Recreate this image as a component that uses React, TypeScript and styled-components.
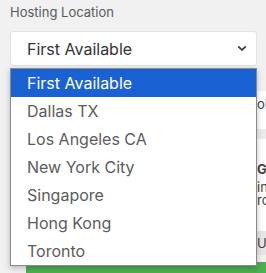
import React from "react";
import styled, { createGlobalStyle } from "styled-components";

const GlobalStyle = createGlobalStyle`
  html, body { margin: 0; padding: 0; }
  body {
    background: #f1f1f1;
    font-family: Inter, "Noto Sans", sans-serif;
    overflow: hidden;
    width: 266px;
    height: 273px;
  }
`;

const Page = styled.div`
  position: relative;
  width: 266px;
  height: 273px;
  overflow: hidden;
`;

const Field = styled.div`
  padding: 3px 0 0 10px;
  display: flex;
  flex-direction: column;
`;

const Label = styled.div`
  font-size: 13px;
  line-height: 19px;
  color: #5a5a5a;
`;

const SelectBox = styled.div`
  margin-top: 9px;
  width: 247px;
  height: 35px;
  box-sizing: border-box;
  background: #fff;
  border: 1px solid #e2e2e2;
  border-radius: 3px;
  display: flex;
  align-items: center;
  justify-content: space-between;
  padding: 0 9px 0 16px;
  font-size: 16px;
  color: #333;
`;

const Behind = styled.div`
  margin: 2px 0 0 26px;
  width: 400px;
  display: flex;
  flex-direction: column;
`;

const Strip = styled.div<{ $bg: string; $h: number; $top?: number }>`
  height: ${(p) => p.$h}px;
  box-sizing: border-box;
  background: ${(p) => p.$bg};
  display: flex;
  flex-direction: column;
  justify-content: ${(p) => (p.$top !== undefined ? "flex-start" : "center")};
  padding: ${(p) => p.$top ?? 0}px 0 0 231px;
`;

const BehindText = styled.div<{ $bold?: boolean; $color?: string; $gap?: number }>`
  font-weight: ${(p) => (p.$bold ? 700 : 400)};
  color: ${(p) => p.$color || "#444"};
  font-size: 13px;
  line-height: 13px;
  margin-top: ${(p) => p.$gap ?? 0}px;
  white-space: nowrap;
`;

const Menu = styled.ul`
  position: absolute;
  top: 68px;
  left: 10px;
  width: 247px;
  box-sizing: border-box;
  margin: 0;
  padding: 0;
  list-style: none;
  background: #fff;
  border: 1px solid #8a8a8a;
  box-shadow: 0 2px 6px rgba(0, 0, 0, 0.25);
`;

const Option = styled.li<{ $active?: boolean }>`
  height: 28px;
  display: flex;
  align-items: center;
  padding-left: 16px;
  font-size: 16px;
  color: ${(p) => (p.$active ? "#fff" : "#5c5c5c")};
  background: ${(p) => (p.$active ? "#1a62d4" : "transparent")};
`;

const Chevron = () => (
  <svg width="10" height="7" viewBox="0 0 10 7">
    <path d="M1.2 1.3 L5 5 L8.8 1.3" fill="none" stroke="#444" strokeWidth="1.8" />
  </svg>
);

const options = [
  "First Available",
  "Dallas TX",
  "Los Angeles CA",
  "New York City",
  "Singapore",
  "Hong Kong",
  "Toronto",
];

export default function App() {
  return (
    <>
      <GlobalStyle />
      <Page>
        <Field>
          <Label>Hosting Location</Label>
          <SelectBox>
            <span>First Available</span>
            <Chevron />
          </SelectBox>
        </Field>
        <Behind>
          <Strip $bg="#f1f1f1" $h={23} />
          <Strip $bg="#ffffff" $h={38} $top={7}>
            <BehindText $color="#2a4a6a">ol</BehindText>
          </Strip>
          <Strip $bg="#ececec" $h={10} />
          <Strip $bg="#ffffff" $h={92}>
            <BehindText $bold>G</BehindText>
            <BehindText $gap={5}>in</BehindText>
            <BehindText>rc</BehindText>
          </Strip>
          <Strip $bg="#e6e6e6" $h={24}>
            <BehindText>US</BehindText>
          </Strip>
          <Strip $bg="#f1f1f1" $h={7} />
          <Strip $bg="#4caf50" $h={20} />
        </Behind>
        <Menu>
          {options.map((o, i) => (
            <Option key={o} $active={i === 0}>
              {o}
            </Option>
          ))}
        </Menu>
      </Page>
    </>
  );
}
